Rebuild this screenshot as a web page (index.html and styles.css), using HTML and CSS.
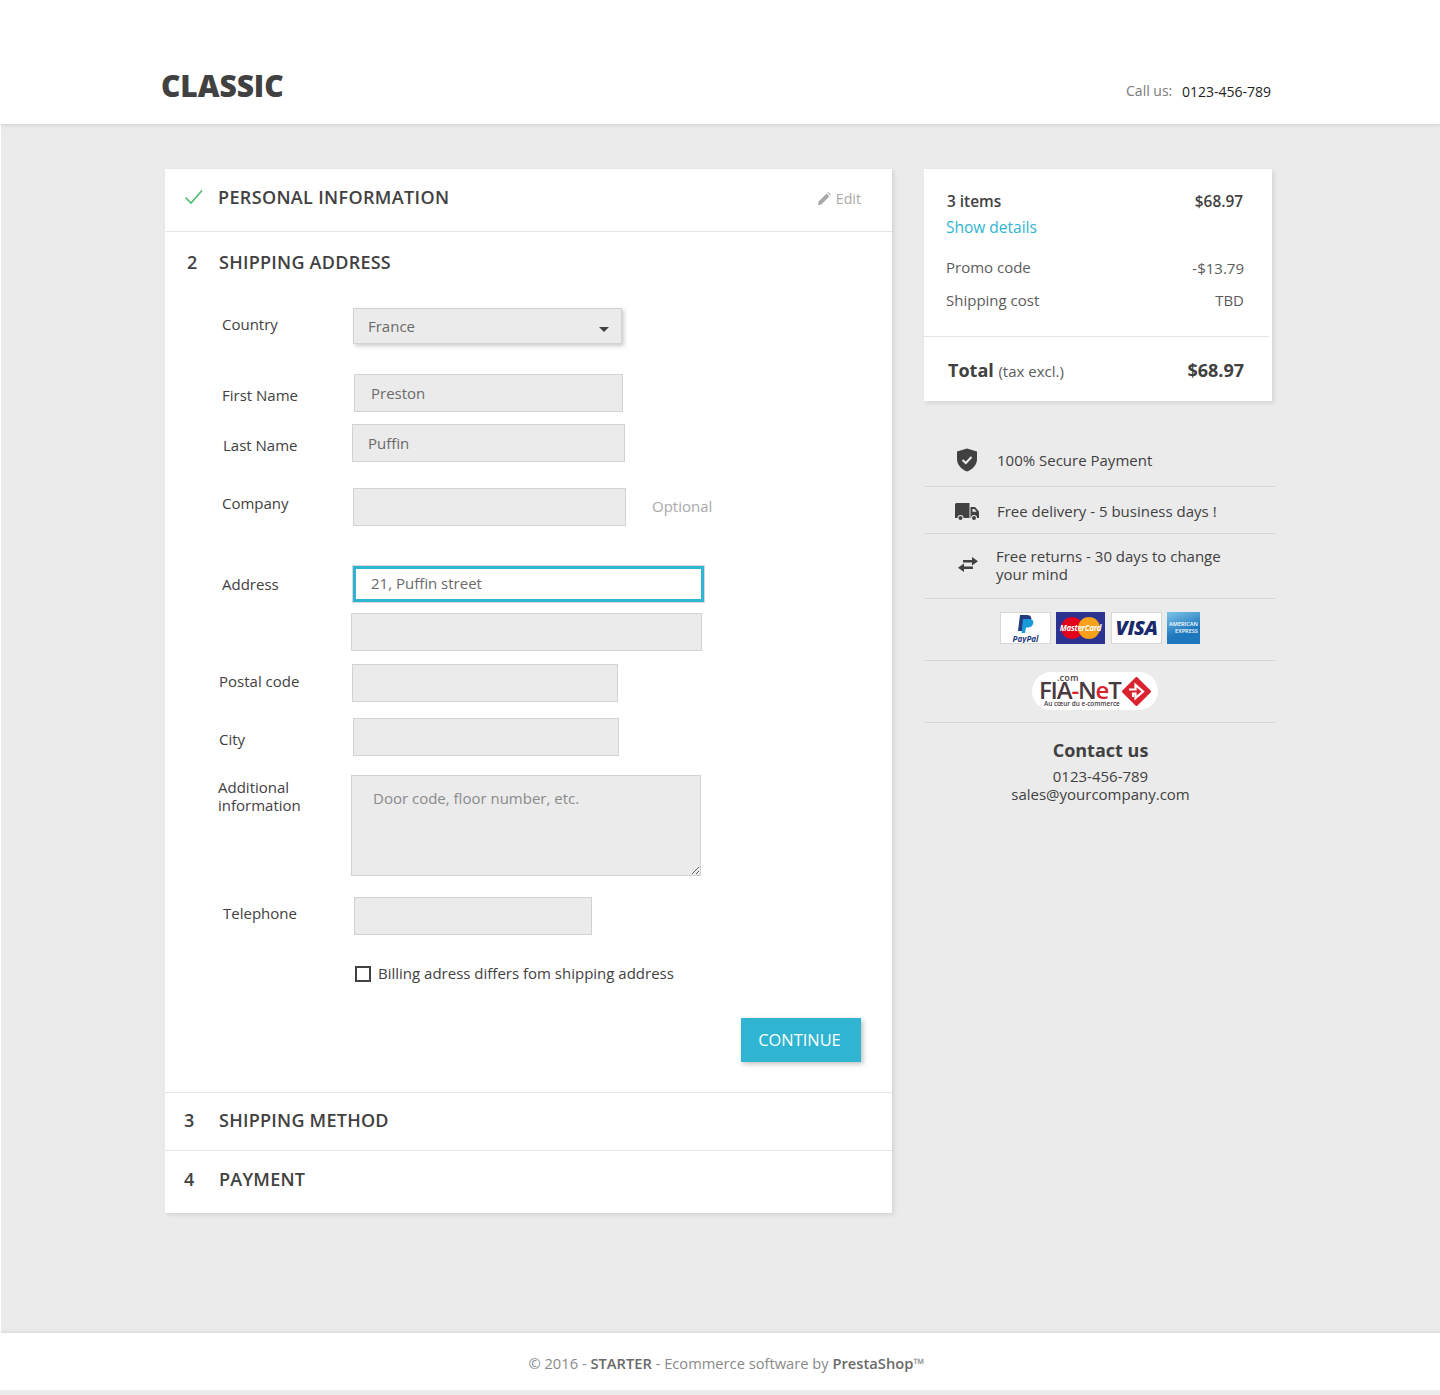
FILE: index.html
```html
<!DOCTYPE html>
<html lang="en">

<head>
    <meta charset="UTF-8">
    <meta name="viewport" content="width=device-width, initial-scale=1.0">
    <title>Classic - Checkout</title>
    <link rel="stylesheet" href="styles.css">
</head>

<body>
    <header class="site-header">
        <h1 class="logo">CLASSIC</h1>
        <p class="call-us"><span>Call us:</span> 0123-456-789</p>
    </header>

    <main class="checkout">
        <section class="steps">
            <div class="step step-done">
                <svg class="check" width="20" height="16" viewBox="0 0 20 16">
                    <path d="M1.5 8.5 L7 14 L18 1.5" fill="none" stroke="#4cbb6c" stroke-width="1.6"/>
                </svg>
                <h2>PERSONAL INFORMATION</h2>
                <a class="edit">
                    <svg width="13" height="13" viewBox="0 0 13 13">
                        <path d="M0 13 L0.6 9.6 L8.6 1.6 L11.4 4.4 L3.4 12.4 Z M9.4 0.8 L10.2 0 L13 2.8 L12.2 3.6 Z" fill="#a9a9a9"/>
                    </svg>
                    Edit
                </a>
            </div>

            <div class="step-current">
                <div class="step-title"><span class="num">2</span><h2>SHIPPING ADDRESS</h2></div>

                <form class="address-form">
                    <div class="row row-country">
                        <label>Country</label>
                        <div class="select-wrap">
                            <select>
                                <option>France</option>
                            </select>
                        </div>
                    </div>
                    <div class="row row-first">
                        <label>First Name</label>
                        <input type="text" value="Preston">
                    </div>
                    <div class="row row-last">
                        <label>Last Name</label>
                        <input type="text" value="Puffin">
                    </div>
                    <div class="row row-company">
                        <label>Company</label>
                        <input type="text">
                        <span class="optional">Optional</span>
                    </div>
                    <div class="row row-address">
                        <label>Address</label>
                        <input class="is-focus" type="text" value="21, Puffin street">
                    </div>
                    <div class="row row-address2">
                        <label></label>
                        <input type="text">
                    </div>
                    <div class="row row-postal">
                        <label>Postal code</label>
                        <input type="text">
                    </div>
                    <div class="row row-city">
                        <label>City</label>
                        <input type="text">
                    </div>
                    <div class="row row-info">
                        <label>Additional information</label>
                        <textarea placeholder="Door code, floor number, etc."></textarea>
                    </div>
                    <div class="row row-phone">
                        <label>Telephone</label>
                        <input type="text">
                    </div>
                    <div class="row row-billing">
                        <label></label>
                        <div class="billing">
                            <input type="checkbox" id="billing">
                            <span>Billing adress differs fom shipping address</span>
                        </div>
                    </div>
                    <div class="form-footer">
                        <button type="button">CONTINUE</button>
                    </div>
                </form>
            </div>

            <div class="step step-next step-method"><span class="num">3</span><h2>SHIPPING METHOD</h2></div>
            <div class="step step-next step-payment"><span class="num">4</span><h2>PAYMENT</h2></div>
        </section>

        <aside class="sidebar">
            <div class="summary">
                <div class="summary-top">
                    <div class="line line-items"><strong>3 items</strong><strong>$68.97</strong></div>
                    <a class="show-details">Show details</a>
                    <div class="line line-promo"><span>Promo code</span><span class="amount">-$13.79</span></div>
                    <div class="line line-ship"><span>Shipping cost</span><span>TBD</span></div>
                </div>
                <div class="line total">
                    <span><strong>Total</strong> <small>(tax excl.)</small></span>
                    <strong>$68.97</strong>
                </div>
            </div>

            <ul class="reassurance">
                <li class="secure">
                    <svg width="22" height="24" viewBox="0 0 22 24">
                        <path d="M11 0.5 L21 3.5 V11 C21 17 16.5 21.5 11 23.5 C5.5 21.5 1 17 1 11 V3.5 Z" fill="#414141"/>
                        <path d="M6.5 12 L9.8 15 L15.5 9" fill="none" stroke="#ebebeb" stroke-width="2"/>
                    </svg>
                    <span>100% Secure Payment</span>
                </li>
                <li class="delivery">
                    <svg width="24" height="18" viewBox="0 0 24 18">
                        <path d="M1.5 0 H14.5 V15 H0 V1.5 Q0 0 1.5 0 Z" fill="#414141"/>
                        <path d="M15.5 4 H20 L24 8.5 V15 H15.5 Z" fill="#414141"/>
                        <path d="M17.5 6 H19.4 L21.6 8.8 H17.5 Z" fill="#ebebeb"/>
                        <circle cx="5.5" cy="15" r="3" fill="#ebebeb"/>
                        <circle cx="5.5" cy="15" r="2" fill="#414141"/>
                        <circle cx="19" cy="15" r="3" fill="#ebebeb"/>
                        <circle cx="19" cy="15" r="2" fill="#414141"/>
                    </svg>
                    <span>Free delivery - 5 business days !</span>
                </li>
                <li class="returns">
                    <svg width="20" height="15" viewBox="0 0 20 15">
                        <path d="M5 3 H14 V0 L20 4.2 L14 8.4 V5.6 H5 Z" fill="#414141"/>
                        <path d="M15 9.4 H6 V6.6 L0 10.8 L6 15 V12 H15 Z" fill="#414141"/>
                    </svg>
                    <span>Free returns - 30 days to change your mind</span>
                </li>
                <li class="cards">
                    <div class="card card-paypal">
                        <svg width="18" height="20" viewBox="0 0 18 20">
                            <path d="M3 0 H10 C14 0 15 3 14 6 C13 9 10 10 7.5 10 H6 L5 16 H1 Z" fill="#253b80"/>
                            <path d="M6 4 H12 C16 4 17 6.5 16 9 C15 12 12 12.5 10 12.5 H9 L8 18 H4.5 Z" fill="#179bd7"/>
                        </svg>
                        <span>PayPal</span>
                    </div>
                    <div class="card card-mc">
                        <i class="mc-red"></i><i class="mc-orange"></i>
                        <span>MasterCard</span>
                    </div>
                    <div class="card card-visa"><span>VISA</span></div>
                    <div class="card card-amex"><span>AMERICAN<br>EXPRESS</span></div>
                </li>
                <li class="fianet">
                    <div class="fia-pill">
                        <span class="fia-com">.com</span>
                        <span class="fia-name">FIA<b>-</b>N<b>e</b>T</span>
                        <svg width="29" height="29" viewBox="0 0 29 29">
                            <path d="M14.5 1.5 L27.5 14.5 L14.5 27.5 L1.5 14.5 Z" fill="#d9232e" stroke="#d9232e" stroke-width="3" stroke-linejoin="round"/>
                            <path d="M7 12.5 H13.5 V8 L21 14.5 L13.5 21 V16.5 H11 V20" fill="none" stroke="#fff" stroke-width="2.2"/>
                        </svg>
                        <span class="fia-tag">Au cœur du e-commerce</span>
                    </div>
                </li>
            </ul>

            <div class="contact">
                <h3>Contact us</h3>
                <p>0123-456-789<br>sales@yourcompany.com</p>
            </div>
        </aside>
    </main>

    <footer class="site-footer">
        <p>© 2016 - <b>STARTER</b> - Ecommerce software by <b>PrestaShop</b>™</p>
    </footer>
</body>

</html>
```

FILE: styles.css
```css
html {
    font-family: "Open Sans", "Noto Sans", sans-serif;
    font-size: 15px;
    color: #414141;
}

body {
    margin: 0;
    background-color: #ebebeb;
}

h1, h2, h3, p, ul {
    margin: 0;
    padding: 0;
}

.site-header {
    height: 124px;
    background-color: white;
    box-shadow: 0 1px 4px rgba(0, 0, 0, .12);
    position: relative;
    display: flex;
    justify-content: space-between;
    align-items: flex-start;
    padding: 0 169px 0 161px;
    box-sizing: border-box;
}

.logo {
    font-size: 30px;
    font-weight: 800;
    line-height: 40px;
    margin-top: 66px;
    letter-spacing: -.1px;
}

.call-us {
    margin-top: 82px;
    font-size: 14px;
    line-height: 20px;
    color: #232323;
}

.call-us span {
    color: #7a7a7a;
    margin-right: 6px;
    position: relative;
    top: -1px;
}

.checkout {
    border-left: 1px solid white;
    height: 1209px;
    box-sizing: border-box;
    padding: 45px 0 0 164px;
    display: flex;
    align-items: flex-start;
}

/* left column */

.steps {
    width: 727px;
    background-color: white;
    box-shadow: 2px 2px 4px rgba(0, 0, 0, .1);
}

.steps h2 {
    font-size: 18px;
    font-weight: 600;
    line-height: 24px;
    letter-spacing: .25px;
}

.num {
    font-size: 18px;
    font-weight: 600;
    line-height: 24px;
}

.step {
    display: flex;
    align-items: center;
    box-sizing: border-box;
}

.step-done {
    height: 63px;
    padding: 0 31px 6px 18px;
    margin-left: 1px;
    border-bottom: 1px solid #e5e5e5;
}

.step-done h2 {
    letter-spacing: .35px;
}

.check {
    margin-right: 14px;
}

.edit {
    margin-left: auto;
    font-size: 14.2px;
    color: #a9a9a9;
    display: flex;
    align-items: center;
    gap: 5px;
    padding-top: 2px;
}

.step-title {
    display: flex;
    padding: 18px 0 0 22px;
}

.step-title .num {
    width: 32px;
}

.address-form {
    padding-top: 34px;
}

.row {
    display: grid;
    grid-template-columns: 186px 1fr;
    align-items: start;
}

.row label {
    display: block;
    font-size: 15px;
    line-height: 18px;
    padding-left: 57px;
    padding-top: 7px;
}

input[type="text"],
textarea,
select {
    display: block;
    box-sizing: border-box;
    background-color: #ebebeb;
    border: 1px solid #d2d2d2;
    font-family: inherit;
    font-size: 15px;
    color: #6a6a6a;
    outline: none;
    border-radius: 0;
    margin: 0;
}

input[type="text"] {
    height: 38px;
    padding: 0 16px;
}

.select-wrap {
    position: relative;
    width: 269px;
    height: 36px;
    margin-left: 2px;
    box-shadow: 2px 2px 4px rgba(0, 0, 0, .2);
}

.select-wrap::after {
    content: "";
    position: absolute;
    right: 13px;
    top: 19px;
    border-left: 5px solid transparent;
    border-right: 5px solid transparent;
    border-top: 5px solid #414141;
}

select {
    appearance: none;
    width: 100%;
    height: 100%;
    padding: 0 14px;
}

.row-first { margin-top: 30px; }
.row-first label { padding-top: 12px; }
.row-first input { width: 269px; margin-left: 3px; padding-left: 16px; }

.row-last { margin-top: 12px; }
.row-last label { padding-top: 12px; padding-left: 58px; }
.row-last input { width: 273px; margin-left: 1px; padding-left: 15px; }

.row-company { margin-top: 26px; grid-template-columns: 186px 273px 1fr; }
.row-company label { padding-top: 6px; }
.row-company input { width: 273px; margin-left: 2px; }

.optional {
    font-size: 15px;
    color: #a9a9a9;
    padding: 8px 0 0 28px;
    font-weight: 500;
}

.row-address { margin-top: 39px; }
.row-address label { padding-top: 10px; }

input.is-focus {
    width: 351px;
    margin-left: 2px;
    background-color: white;
    border: 3px solid #2fb5d2;
    box-shadow: 0 0 0 1px #d8d8d8;
    height: 36px;
    margin-top: 1px;
    padding: 0 15px 2px;
}

.row-address2 { margin-top: 11px; }
.row-address2 input { width: 351px; }

.row-postal { margin-top: 13px; }
.row-postal label { padding-left: 54px; padding-top: 8px; }
.row-postal input { width: 266px; margin-left: 1px; }

.row-city { margin-top: 16px; }
.row-city label { padding-left: 54px; padding-top: 12px; }
.row-city input { width: 266px; margin-left: 2px; }

.row-info { margin-top: 19px; }
.row-info label { padding-left: 53px; padding-top: 3px; width: 115px; }

textarea {
    width: 350px;
    height: 101px;
    padding: 12px 21px;
    resize: vertical;
}

textarea::placeholder {
    color: #8a8a8a;
    opacity: 1;
}

.row-phone { margin-top: 21px; }
.row-phone label { padding-left: 58px; padding-top: 7px; }
.row-phone input { width: 238px; margin-left: 3px; }

.row-billing { margin-top: 28px; }

.billing {
    display: flex;
    align-items: center;
    margin-left: 4px;
    height: 22px;
}

.billing span {
    font-size: 15px;
    margin: -2px 0 0 7px;
}

input[type="checkbox"] {
    appearance: none;
    width: 16px;
    height: 16px;
    margin: 0;
    border: 2px solid #414141;
    background-color: white;
}

.form-footer {
    display: flex;
    justify-content: flex-end;
    padding: 33px 31px 30px 0;
}

button {
    width: 120px;
    height: 44px;
    border: 0;
    padding: 0 3px 2px 0;
    background-color: #2fb5d2;
    color: white;
    font-family: inherit;
    font-size: 16.4px;
    font-weight: 500;
    box-shadow: 2px 2px 5px rgba(0, 0, 0, .25);
}

.step-next {
    border-top: 1px solid #e5e5e5;
    padding-left: 19px;
}

.step-next .num {
    width: 35px;
}

.step-method { height: 58px; padding-bottom: 4px; }
.step-payment { height: 63px; padding-bottom: 6px; }

/* right column */

.sidebar {
    width: 351px;
    margin-left: 32px;
}

.summary {
    width: 348px;
    background-color: white;
    box-shadow: 2px 2px 4px rgba(0, 0, 0, .1);
}

.summary-top {
    padding: 23px 25px 26px 22px;
    margin-right: 3px;
    border-bottom: 1px solid #e5e5e5;
}

.line {
    display: flex;
    justify-content: space-between;
}

.summary strong {
    font-weight: 600;
}

.line-items {
    font-size: 15.4px;
    line-height: 20px;
    padding-left: 1px;
    margin-right: 1px;
}

.show-details {
    display: block;
    font-size: 15.5px;
    color: #2fb5d2;
    line-height: 20px;
    margin-top: 5px;
}

.line-promo {
    line-height: 20px;
    margin-top: 20px;
    color: #5c5c5c;
}

.amount {
    position: relative;
    top: 1px;
}

.line-ship {
    line-height: 20px;
    margin-top: 13px;
    color: #5c5c5c;
}

.total {
    padding: 20px 28px 16px 24px;
    align-items: baseline;
    line-height: 27px;
    font-size: 18px;
}

.summary .total strong {
    font-weight: 700;
}

.total small {
    font-size: 15px;
    color: #5c5c5c;
}

.reassurance {
    list-style: none;
    margin-top: 35px;
    margin-left: 1px;
}

.reassurance li {
    display: flex;
    align-items: center;
    border-bottom: 1px solid #d6d6d6;
    box-sizing: border-box;
    line-height: 18px;
    padding-left: 30px;
}

.reassurance li > svg {
    flex: none;
}

.secure { height: 51px; padding-bottom: 2px; }
.secure span { margin: 0 0 0 19px; }
.secure svg { margin-left: 1px; }

.delivery { height: 47px; padding-top: 2px; }
.delivery span { margin-left: 18px; }
.delivery svg { margin-top: 2px; }

.returns { height: 65px; padding-bottom: 2px; }
.returns span { margin-left: 18px; width: 240px; }
.returns svg { margin-left: 3px; margin-top: -2px; }

.reassurance .cards {
    height: 62px;
    padding: 13px 0 0 75px;
    align-items: flex-start;
    gap: 5px;
}

.card {
    height: 32px;
    position: relative;
    box-sizing: border-box;
    overflow: hidden;
    display: flex;
    align-items: center;
    justify-content: center;
}

.card-paypal {
    width: 51px;
    background-color: white;
    border: 1px solid #d6d6d6;
    flex-direction: column;
}

.card-paypal svg {
    margin-top: 1px;
}

.card-paypal span {
    font-size: 8px;
    line-height: 8px;
    font-weight: 700;
    font-style: italic;
    color: #253b80;
}

.card-mc {
    width: 49px;
    background-color: #2c3290;
}

.mc-red, .mc-orange {
    position: absolute;
    top: 5px;
    width: 22px;
    height: 22px;
    border-radius: 50%;
}

.mc-red {
    left: 5px;
    background-color: #e5001c;
}

.mc-orange {
    right: 5px;
    background-color: #f9a11b;
}

.card-mc span {
    position: relative;
    font-size: 8px;
    font-weight: 700;
    font-style: italic;
    color: white;
    letter-spacing: -.3px;
}

.card-visa {
    width: 51px;
    margin-left: 1px;
    background-color: white;
    border: 1px solid #d6d6d6;
}

.card-visa span {
    font-size: 20px;
    font-weight: 800;
    font-style: italic;
    color: #1a2a6c;
    letter-spacing: -.5px;
}

.card-amex {
    width: 33px;
    background: linear-gradient(160deg, #7cc4e8, #1f78bd 60%);
}

.card-amex span {
    font-size: 5.6px;
    line-height: 7px;
    color: white;
    white-space: nowrap;
    font-weight: 600;
    text-align: right;
}

.reassurance .fianet {
    height: 62px;
    padding: 11px 0 0 107px;
    align-items: flex-start;
}

.fia-pill {
    position: relative;
    width: 126px;
    height: 38px;
    background-color: white;
    border-radius: 19px;
}

.fia-com {
    position: absolute;
    left: 25px;
    top: 2px;
    font-size: 8.5px;
    line-height: 7px;
    font-weight: 600;
    letter-spacing: .5px;
    color: #4a3a3f;
}

.fia-name {
    position: absolute;
    left: 7px;
    top: 9px;
    font-size: 24px;
    line-height: 18px;
    font-weight: 600;
    color: #4a3a3f;
    letter-spacing: -1.2px;
}

.fia-name b {
    display: inline-block;
    font-weight: 600;
    color: #d9232e;
}

.fia-pill svg {
    position: absolute;
    right: 7px;
    top: 5px;
}

.fia-tag {
    position: absolute;
    left: 12px;
    top: 28px;
    font-size: 6.4px;
    line-height: 7px;
    font-weight: 600;
    color: #4a3a3f;
}

.contact {
    text-align: center;
    padding-top: 14px;
    margin-left: 2px;
}

.contact h3 {
    font-size: 18px;
    font-weight: 700;
    line-height: 26px;
}

.contact p {
    font-size: 15px;
    line-height: 18px;
    margin-top: 4px;
}

.site-footer {
    height: 57px;
    background-color: white;
    box-shadow: 0 0 4px rgba(0, 0, 0, .12);
    display: flex;
    justify-content: center;
    align-items: center;
    font-size: 14.7px;
    color: #8a8a8a;
    padding: 3px 0 0 13px;
    box-sizing: border-box;
    position: relative;
}

.site-footer b {
    font-weight: 600;
    color: #6a6a6a;
}
```
